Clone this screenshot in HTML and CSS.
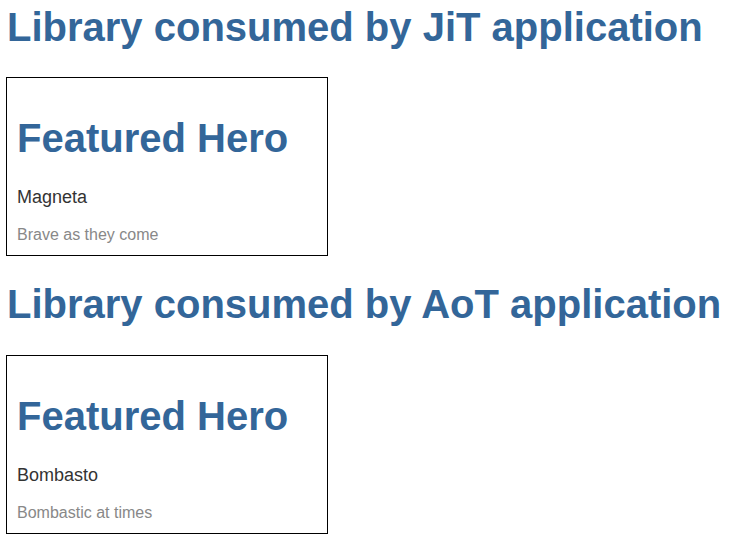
FILE: index.html
```html
<!DOCTYPE html>
<html>
<head>
<meta charset="utf-8">
<link rel="stylesheet" href="styles.css">
</head>
<body>
<section class="demo">
  <h1 class="title">Library consumed by JiT application</h1>
  <div class="hero-card">
    <h1 class="hero-title">Featured Hero</h1>
    <p class="hero-name">Magneta</p>
    <p class="hero-desc">Brave as they come</p>
  </div>
</section>
<section class="demo">
  <h1 class="title">Library consumed by AoT application</h1>
  <div class="hero-card">
    <h1 class="hero-title">Featured Hero</h1>
    <p class="hero-name">Bombasto</p>
    <p class="hero-desc">Bombastic at times</p>
  </div>
</section>
</body>
</html>
```
FILE: styles.css
```css
html, body {
  background: #fff;
}
body {
  margin: 0;
  padding: 3.5px 6px 0;
  font-family: "Liberation Sans", Arial, sans-serif;
}
.demo {
  display: flex;
  flex-direction: column;
  align-items: flex-start;
  margin-bottom: 25.5px;
}
.title {
  color: #369;
  font-size: 40px;
  font-weight: bold;
  line-height: 46px;
  margin: 0 0 27.5px 1px;
}
.hero-card {
  width: 302px;
  border: 1px solid #000;
  padding: 6px 8px 10.5px 10px;
}
.hero-title {
  color: #369;
  font-size: 40px;
  font-weight: bold;
  line-height: 46px;
  margin: 30.7px 0 26.4px;
}
.hero-name {
  color: #333;
  font-size: 18px;
  line-height: 20px;
  margin: 0 0 19.35px;
}
.hero-desc {
  color: #888;
  font-size: 16px;
  line-height: 18px;
  margin: 0;
}
```
